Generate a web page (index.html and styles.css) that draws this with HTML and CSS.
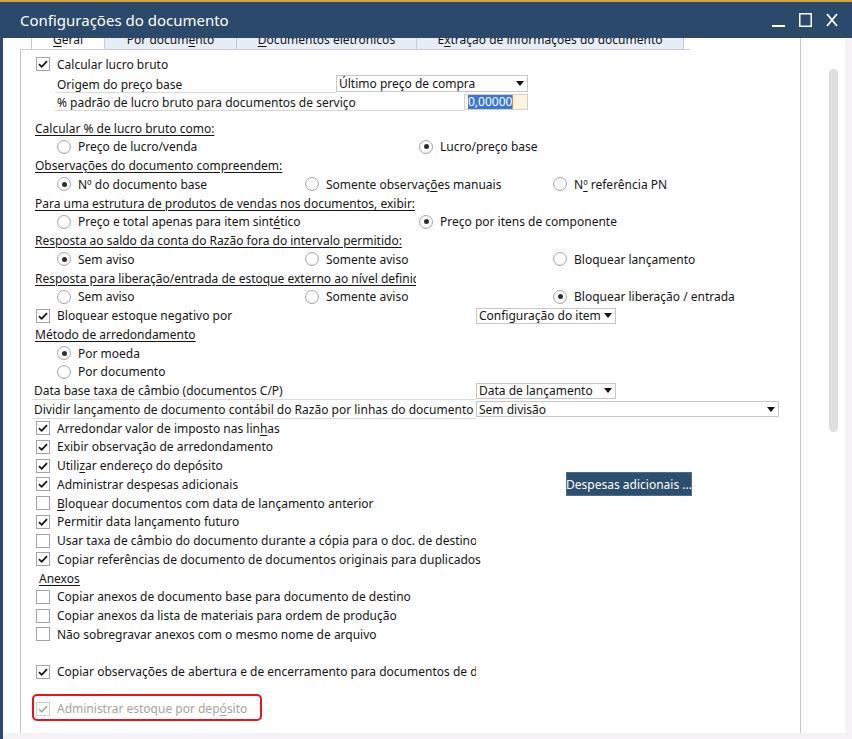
FILE: index.html
```html
<!DOCTYPE html>
<html lang="pt">
<head>
<meta charset="utf-8">
<title>Configurações do documento</title>
<link rel="stylesheet" href="styles.css">
</head>
<body>
<div class="win">
  <header class="titlebar">
    <span class="title">Configurações do documento</span>
    <div class="wbtns">
      <svg class="wb-min" width="15" height="16" viewBox="0 0 15 16"><path d="M1 14H14" stroke="#fff" stroke-width="2"/></svg>
      <svg class="wb-max" width="13" height="16" viewBox="0 0 13 16"><rect x="0.75" y="1.75" width="11.5" height="12.5" fill="none" stroke="#fff" stroke-width="1.5"/></svg>
      <svg class="wb-close" width="12" height="16" viewBox="0 0 12 16"><path d="M1 2L11 14M11 2L1 14" stroke="#fff" stroke-width="1.8"/></svg>
    </div>
  </header>
  <div class="client">
    <div class="inner">
      <div class="content">
        <div class="tabs">
          <div class="tab active t1"><span><u>G</u>eral</span></div>
          <div class="tab t2"><span>Por docum<u>e</u>nto</span></div>
          <div class="tab t3"><span><u>D</u>ocumentos eletrônicos</span></div>
          <div class="tab t4"><span>E<u>x</u>tração de informações do documento</span></div>
        </div>
        <div class="panel">
          <div class="row cbrow first">
            <span class="cb on"><svg viewBox="0 0 12 12"><path d="M2 6.2l2.7 2.7L10 3.2"/></svg></span>
            <span>Calcular lucro bruto</span>
          </div>
          <div class="field f-origem">
            <span class="flabel w281">Origem do preço base</span>
            <span class="dd w192"><span>Último preço de compra</span><i class="arr"></i></span>
          </div>
          <div class="field f-padrao">
            <span class="flabel w409">% padrão de lucro bruto para documentos de serviço</span>
            <span class="inp"><span class="sel">0,00000</span><span class="caret"></span></span>
          </div>

          <div class="row head"><span>Calcular % de lucro bruto como:</span></div>
          <div class="row radios">
            <label class="opt c1"><span class="rb"></span><span>Preço de lucro/venda</span></label>
            <label class="opt c3"><span class="rb on"></span><span>Lucro/preço base</span></label>
          </div>

          <div class="row head"><span>Observações do documento compreendem:</span></div>
          <div class="row radios">
            <label class="opt c1"><span class="rb on"></span><span>Nº do documento base</span></label>
            <label class="opt c2"><span class="rb"></span><span>Somente observaç<u>õ</u>es manuais</span></label>
            <label class="opt c4"><span class="rb"></span><span>N<u>º</u> referência PN</span></label>
          </div>

          <div class="row head"><span>Para uma estrutura de produtos de vendas nos documentos, exibir:</span></div>
          <div class="row radios">
            <label class="opt c1"><span class="rb"></span><span>Preço e total apenas para item sint<u>é</u>tico</span></label>
            <label class="opt c3"><span class="rb on"></span><span>Preço por itens de componente</span></label>
          </div>

          <div class="row head"><span>Resposta ao saldo da conta do Razão fora do intervalo permitido:</span></div>
          <div class="row radios">
            <label class="opt c1"><span class="rb on"></span><span>Sem aviso</span></label>
            <label class="opt c2"><span class="rb"></span><span>Somente aviso</span></label>
            <label class="opt c4"><span class="rb"></span><span>Bloquear lançamento</span></label>
          </div>

          <div class="row head"><span class="clip-head">Resposta para liberação/entrada de estoque externo ao nível definido</span></div>
          <div class="row radios">
            <label class="opt c1"><span class="rb"></span><span>Sem aviso</span></label>
            <label class="opt c2"><span class="rb"></span><span>Somente aviso</span></label>
            <label class="opt c4"><span class="rb on"></span><span>Bloquear liberação / entrada</span></label>
          </div>

          <div class="row cbrow">
            <span class="cb on"><svg viewBox="0 0 12 12"><path d="M2 6.2l2.7 2.7L10 3.2"/></svg></span>
            <span class="w419">Bloquear estoque negativo por</span>
            <span class="dd w140"><span>Configuração do item</span><i class="arr"></i></span>
          </div>

          <div class="row head"><span>Método de arredondamento</span></div>
          <div class="row radios">
            <label class="opt c1"><span class="rb on"></span><span>Por moeda</span></label>
          </div>
          <div class="row radios">
            <label class="opt c1"><span class="rb"></span><span>Por documento</span></label>
          </div>

          <div class="row field2">
            <span class="flabel w444">Data base taxa de câmbio (documentos C/P)</span>
            <span class="dd w140"><span>Data de lançamento</span><i class="arr"></i></span>
          </div>
          <div class="row field2">
            <span class="flabel w444">Dividir lançamento de documento contábil do Razão por linhas do documento</span>
            <span class="dd w303"><span>Sem divisão</span><i class="arr"></i></span>
          </div>

          <div class="row cbrow">
            <span class="cb on"><svg viewBox="0 0 12 12"><path d="M2 6.2l2.7 2.7L10 3.2"/></svg></span>
            <span>Arredondar valor de imposto nas lin<u>h</u>as</span>
          </div>
          <div class="row cbrow">
            <span class="cb on"><svg viewBox="0 0 12 12"><path d="M2 6.2l2.7 2.7L10 3.2"/></svg></span>
            <span>Exibir observação de arredondamento</span>
          </div>
          <div class="row cbrow">
            <span class="cb on"><svg viewBox="0 0 12 12"><path d="M2 6.2l2.7 2.7L10 3.2"/></svg></span>
            <span>Utili<u>z</u>ar endereço do depósito</span>
          </div>
          <div class="row cbrow">
            <span class="cb on"><svg viewBox="0 0 12 12"><path d="M2 6.2l2.7 2.7L10 3.2"/></svg></span>
            <span class="w509">Administrar despesas adicionais</span>
            <span class="btn">Despesas adicionais ...</span>
          </div>
          <div class="row cbrow">
            <span class="cb"><svg viewBox="0 0 12 12"><path d="M2 6.2l2.7 2.7L10 3.2"/></svg></span>
            <span><u>B</u>loquear documentos com data de lançamento anterior</span>
          </div>
          <div class="row cbrow">
            <span class="cb on"><svg viewBox="0 0 12 12"><path d="M2 6.2l2.7 2.7L10 3.2"/></svg></span>
            <span>Permitir data lançamento futuro</span>
          </div>
          <div class="row cbrow">
            <span class="cb"><svg viewBox="0 0 12 12"><path d="M2 6.2l2.7 2.7L10 3.2"/></svg></span>
            <span class="clip">Usar taxa de câmbio do documento durante a cópia para o doc. de destino</span>
          </div>
          <div class="row cbrow">
            <span class="cb on"><svg viewBox="0 0 12 12"><path d="M2 6.2l2.7 2.7L10 3.2"/></svg></span>
            <span>Copiar referências de documento de documentos originais para duplicados</span>
          </div>

          <div class="row head anexos"><span>Anexos</span></div>
          <div class="row cbrow">
            <span class="cb"><svg viewBox="0 0 12 12"><path d="M2 6.2l2.7 2.7L10 3.2"/></svg></span>
            <span>Copiar anexos de documento base para documento de destino</span>
          </div>
          <div class="row cbrow">
            <span class="cb"><svg viewBox="0 0 12 12"><path d="M2 6.2l2.7 2.7L10 3.2"/></svg></span>
            <span>Copiar anexos da lista de materiais para ordem de produção</span>
          </div>
          <div class="row cbrow">
            <span class="cb"><svg viewBox="0 0 12 12"><path d="M2 6.2l2.7 2.7L10 3.2"/></svg></span>
            <span>Não sobregravar anexos com o mesmo nome de arquivo</span>
          </div>
          <div class="row"></div>
          <div class="row cbrow">
            <span class="cb on"><svg viewBox="0 0 12 12"><path d="M2 6.2l2.7 2.7L10 3.2"/></svg></span>
            <span class="clip">Copiar observações de abertura e de encerramento para documentos de destino</span>
          </div>

          <div class="redbox">
            <span class="cb on disabled"><svg viewBox="0 0 12 12"><path d="M2 6.2l2.7 2.7L10 3.2"/></svg></span>
            <span class="dis">Administrar estoque por dep<u>ó</u>sito</span>
          </div>
        </div>
      </div>
      <div class="vscroll"><div class="thumb"></div></div>
    </div>
  </div>
</div>
</body>
</html>
```
FILE: styles.css
```css
* { box-sizing: border-box; }
html, body { margin: 0; padding: 0; }
body {
  width: 852px;
  height: 739px;
  overflow: hidden;
  background: #f5f2f5;
  font-family: "Noto Sans", "Open Sans", sans-serif;
  font-size: 12px;
  color: #151515;
}
u { text-decoration: underline; text-underline-offset: 2px; }

.win { width: 852px; height: 739px; display: flex; flex-direction: column; }

.titlebar {
  height: 38px;
  flex: none;
  background: #2b4a6b;
  border-top: 2px solid #d3a33c;
  display: flex;
  align-items: center;
  padding-left: 20px;
  color: #fff;
}
.title { flex: 1; font-size: 15px; margin-top: 0; }
.wbtns { display: flex; align-items: center; padding-right: 14px; margin-top: -1px; }
.wb-min { margin-right: 13px; }
.wb-max { margin-right: 14px; }

.client {
  flex: 1;
  display: flex;
  border-left: 3px solid #2b4a6b;
}
.inner {
  width: 842px;
  height: 695px;
  background: #fff;
  display: flex;
  padding-left: 17px;
}
.content { width: 780px; display: flex; flex-direction: column; }

.tabs {
  height: 12px;
  flex: none;
  width: 670px;
  display: flex;
  padding-left: 11px;
  border-bottom: 1px solid #c9cdd3;
  overflow: hidden;
}
.tab {
  display: flex;
  justify-content: center;
  background: #e6edf5;
  border-right: 1px solid #c3cad3;
  white-space: nowrap;
}
.tab span { line-height: 15px; margin-top: -6px; }
.tab.active { background: #fff; border-left: 1px solid #c3cad3; }
.t1 { width: 74px; }
.t2 { width: 132px; }
.t3 { width: 180px; }
.t4 { width: 267px; }

.panel {
  flex: 1;
  border-left: 1px solid #c7c7c7;
  padding-top: 5px;
}

.row {
  height: 18.75px;
  display: flex;
  align-items: center;
  white-space: nowrap;
}
.cbrow { padding-left: 15px; gap: 7px; }
.first { margin-bottom: 1.5px; }

.cb {
  width: 14px;
  height: 14px;
  flex: none;
  border: 1px solid #a3a3a3;
  background: #fff;
  display: flex;
  align-items: center;
  justify-content: center;
}
.cb svg { width: 12px; height: 12px; display: none; }
.cb.on svg { display: block; }
.cb path { fill: none; stroke: #111; stroke-width: 1.7; }
.cb.disabled { border-color: #cdcdcd; }
.cb.disabled path { stroke: #a9a9a9; }

.head { padding-left: 14px; }
.head > span { text-decoration: underline; text-underline-offset: 2px; }
.anexos { padding-left: 18px; }
.clip-head { display: block; width: 381px; overflow: hidden; }

.radios {
  display: grid;
  grid-template-columns: 248px 114px 134px auto;
  padding-left: 36px;
}
.opt { display: flex; align-items: center; gap: 7px; white-space: nowrap; }
.c1 { grid-column: 1; }
.c2 { grid-column: 2 / span 2; }
.c3 { grid-column: 3 / span 2; }
.c4 { grid-column: 4; }
.rb {
  width: 14px;
  height: 14px;
  flex: none;
  border-radius: 50%;
  border: 1px solid #a6a6a6;
  background: radial-gradient(circle at 50% 40%, #fff 40%, #eeeeee 100%);
  position: relative;
}
.rb.on::after {
  content: "";
  position: absolute;
  inset: 0;
  margin: auto;
  width: 5px;
  height: 5px;
  border-radius: 50%;
  background: #2e2e2e;
}

.field {
  height: 18px;
  display: flex;
  padding-left: 34px;
  white-space: nowrap;
}
.f-padrao { margin-bottom: 7.6px; }
.flabel {
  display: flex;
  align-items: center;
  padding-left: 2px;
  padding-top: 2px;
  border-bottom: 1px solid #d9d9d9;
  overflow: hidden;
}
.field2 { padding-left: 11px; align-items: stretch; }
.field2 .flabel { padding-top: 1px; }
.field2 .dd { align-self: center; height: 16px; }

.w281 { width: 281px; flex: none; }
.w409 { width: 409px; flex: none; }
.w444 { width: 444px; flex: none; }
.w419 { width: 419px; flex: none; }
.w509 { width: 509px; flex: none; }
.w192 { width: 192px; }
.w140 { width: 140px; }
.w303 { width: 303px; }

.dd {
  flex: none;
  height: 17px;
  border: 1px solid #c6c6c6;
  background: #fff;
  display: flex;
  align-items: center;
  justify-content: space-between;
  padding: 0 3px 0 2px;
  white-space: nowrap;
  overflow: hidden;
}
.cbrow .dd { height: 16px; margin-left: -7px; }
.arr {
  flex: none;
  width: 0;
  height: 0;
  border-left: 4px solid transparent;
  border-right: 4px solid transparent;
  border-top: 5px solid #111;
}

.inp {
  width: 64px;
  height: 16px;
  margin-top: 1px;
  flex: none;
  border: 1px solid #d6d0c8;
  background: #fdf1e1;
  display: flex;
  align-items: center;
  padding-left: 3px;
}
.sel { background: #3b78d4; color: #fff; line-height: 14px; }
.caret { width: 1px; height: 14px; background: #e8891e; }

.clip { display: block; width: 419px; overflow: hidden; }

.btn {
  flex: none;
  margin-left: -7px;
  height: 24px;
  width: 126px;
  margin-top: -3px;
  margin-bottom: -3px;
  background: #2c4e6f;
  border: 1px solid #4c6d8c;
  color: #fff;
  display: flex;
  align-items: center;
  justify-content: center;
}

.redbox {
  margin-top: 13px;
  margin-left: 11px;
  width: 230px;
  height: 27px;
  border: 2px solid #e8141b;
  border-radius: 5px;
  display: flex;
  align-items: center;
  padding-left: 2px;
  padding-top: 2px;
  gap: 7px;
  white-space: nowrap;
}
.dis { color: #a3a3a3; }

.vscroll {
  width: 45px;
  flex: none;
  border-left: 1px solid #c9c9c9;
  padding-left: 28px;
  padding-top: 31px;
}
.thumb {
  width: 9px;
  height: 363px;
  border-radius: 4.5px;
  background: #dedede;
}
```
